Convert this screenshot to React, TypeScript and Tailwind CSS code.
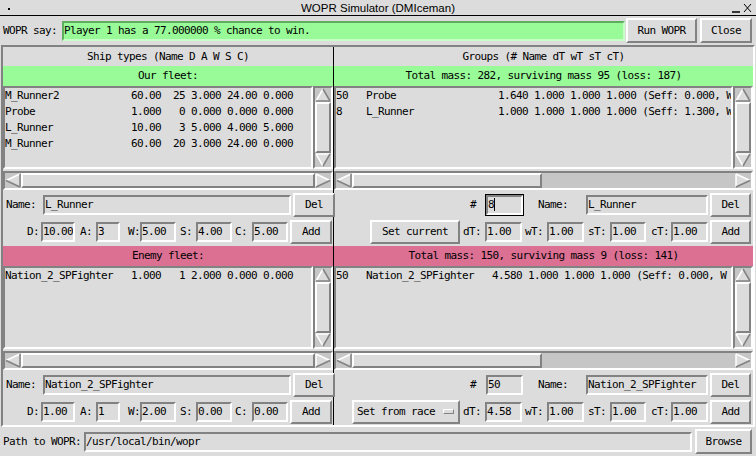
import React from "react";

const raised =
  "border-2 border-t-white border-l-white border-r-[#828282] border-b-[#828282]";
const sunken =
  "border-2 border-t-[#828282] border-l-[#828282] border-r-white border-b-white";

function Btn({ className = "", children }: { className?: string; children?: React.ReactNode }) {
  return (
    <div
      className={`${raised} bg-[#dcdcdc] h-[24px] shrink-0 flex items-center justify-center ${className}`}
    >
      {children}
    </div>
  );
}

function Entry({
  className = "",
  children,
  focus = false,
}: {
  className?: string;
  children?: React.ReactNode;
  focus?: boolean;
}) {
  return (
    <div
      className={`${sunken} h-[20px] shrink-0 flex items-center overflow-hidden whitespace-pre ${
        focus ? "outline outline-black" : ""
      } ${className}`}
    >
      {children}
    </div>
  );
}

function Label({ className = "", children }: { className?: string; children?: React.ReactNode }) {
  return <span className={`shrink-0 whitespace-pre ${className}`}>{children}</span>;
}

const G = "#dcdcdc";
const D = "#828282";

function ArrowUp() {
  return (
    <svg width="16" height="14" viewBox="0 0 16 14" className="shrink-0">
      <polygon points="8,1 1,13 15,13" fill={G} />
      <line x1="1" y1="13" x2="8" y2="1" stroke="white" strokeWidth="1.5" />
      <line x1="8" y1="1" x2="15" y2="13" stroke={D} strokeWidth="1.5" />
      <line x1="1" y1="13" x2="15" y2="13" stroke={D} strokeWidth="1.5" />
    </svg>
  );
}

function ArrowDown() {
  return (
    <svg width="16" height="14" viewBox="0 0 16 14" className="shrink-0">
      <polygon points="1,1 15,1 8,13" fill={G} />
      <line x1="1" y1="1" x2="15" y2="1" stroke="white" strokeWidth="1.5" />
      <line x1="1" y1="1" x2="8" y2="13" stroke="white" strokeWidth="1.5" />
      <line x1="15" y1="1" x2="8" y2="13" stroke={D} strokeWidth="1.5" />
    </svg>
  );
}

function ArrowLeft() {
  return (
    <svg width="16" height="15" viewBox="0 0 16 15" className="shrink-0">
      <polygon points="1,7.5 15,1 15,14" fill={G} />
      <line x1="1" y1="7.5" x2="15" y2="1" stroke="white" strokeWidth="1.5" />
      <line x1="1" y1="7.5" x2="15" y2="14" stroke={D} strokeWidth="1.5" />
      <line x1="15" y1="1" x2="15" y2="14" stroke={D} strokeWidth="1.5" />
    </svg>
  );
}

function ArrowRight() {
  return (
    <svg width="16" height="15" viewBox="0 0 16 15" className="shrink-0">
      <polygon points="1,1 15,7.5 1,14" fill={G} />
      <line x1="1" y1="1" x2="1" y2="14" stroke="white" strokeWidth="1.5" />
      <line x1="1" y1="1" x2="15" y2="7.5" stroke="white" strokeWidth="1.5" />
      <line x1="15" y1="7.5" x2="1" y2="14" stroke={D} strokeWidth="1.5" />
    </svg>
  );
}

function VScroll() {
  return (
    <div className={`${sunken} w-[20px] shrink-0 bg-[#c6c6c6] flex flex-col items-center`}>
      <ArrowUp />
      <div className={`${raised} w-full flex-1 bg-[#dcdcdc]`} />
      <ArrowDown />
    </div>
  );
}

function HScroll({ full = true }: { full?: boolean }) {
  return (
    <div className="h-[22px] flex items-center">
      <div className={`${sunken} h-[19px] w-full bg-[#c6c6c6] flex items-center`}>
        <ArrowLeft />
        <div
          className={`${raised} h-full bg-[#dcdcdc] ${full ? "flex-1" : "w-[190px]"}`}
        />
        {!full && <div className="flex-1" />}
        <ArrowRight />
      </div>
    </div>
  );
}

function ListBox({ lines }: { lines: string[] }) {
  return (
    <div className={`${sunken} flex-1 min-w-0 overflow-hidden whitespace-pre leading-[16px]`}>
      {lines.map((l) => (
        <div key={l}>{l}</div>
      ))}
    </div>
  );
}

function ListArea({ lines }: { lines: string[] }) {
  return (
    <div className="h-[83px] flex">
      <ListBox lines={lines} />
      <VScroll />
    </div>
  );
}

function ShipRows({ name, d, a, w, s, c, last = false }: {
  name: string; d: string; a: string; w: string; s: string; c: string; last?: boolean;
}) {
  return (
    <>
      <div className="h-[27px] flex items-center pl-[3px]">
        <Label className="w-[34px]">Name:</Label>
        <Entry className="ml-[3px] w-[248px]">{name}</Entry>
        <Btn className="ml-[2px] w-[42px]">Del</Btn>
      </div>
      <div className={`${last ? "h-[27px]" : "h-[28px]"} flex items-center pl-[21px]`}>
        <Label className="w-[17px] pl-[3px]">D:</Label>
        <Entry className="w-[34px]">{d}</Entry>
        <Label className="ml-[5px] w-[16px]">A:</Label>
        <Entry className="w-[24px]">{a}</Entry>
        <Label className="ml-[8px] w-[12px]">W:</Label>
        <Entry className="w-[36px]">{w}</Entry>
        <Label className="ml-[4px] w-[16px]">S:</Label>
        <Entry className="w-[36px]">{s}</Entry>
        <Label className="ml-[3px] w-[17px]">C:</Label>
        <Entry className="w-[36px]">{c}</Entry>
        <Btn className="ml-[2px] w-[42px]">Add</Btn>
      </div>
    </>
  );
}

function GroupRows({ num, name, dT, focus = false, fromRace = false, last = false }: {
  num: string; name: string; dT: string; focus?: boolean; fromRace?: boolean; last?: boolean;
}) {
  return (
    <>
      <div className="h-[27px] flex items-center pr-[2px]">
        <Label className="ml-auto w-[6px]">#</Label>
        <Entry focus={focus} className="ml-[10px] w-[37px]">
          {num}
          {focus && <span className="inline-block w-[1px] h-[13px] bg-black" />}
        </Entry>
        <Label className="ml-[15px] w-[30px]">Name:</Label>
        <Entry className="ml-[18px] w-[122px]">{name}</Entry>
        <Btn className="ml-[2px] w-[41px]">Del</Btn>
      </div>
      <div className={`${last ? "h-[27px]" : "h-[28px]"} flex items-center pr-[2px]`}>
        {fromRace ? (
          <Btn className="ml-auto w-[108px] justify-start pl-[3px]">
            <span className="whitespace-pre">Set from race</span>
            <span className={`${raised} ml-[8px] w-[11px] h-[5px] border-[1px]`} />
          </Btn>
        ) : (
          <Btn className="ml-auto w-[90px]">Set current</Btn>
        )}
        <Label className="ml-[3px] w-[18px]">dT:</Label>
        <Entry className="ml-[4px] w-[37px]">{dT}</Entry>
        <Label className="ml-[3px] w-[18px]">wT:</Label>
        <Entry className="ml-[4px] w-[37px]">1.00</Entry>
        <Label className="ml-[4px] w-[18px]">sT:</Label>
        <Entry className="ml-[4px] w-[36px]">1.00</Entry>
        <Label className="ml-[5px] w-[18px]">cT:</Label>
        <Entry className="ml-[2px] w-[37px]">1.00</Entry>
        <Btn className="ml-[2px] w-[41px]">Add</Btn>
      </div>
    </>
  );
}

const ourShips = [
  "M_Runner2            60.00  25 3.000 24.00 0.000",
  "Probe                1.000   0 0.000 0.000 0.000",
  "L_Runner             10.00   3 5.000 4.000 5.000",
  "M_Runner             60.00  20 3.000 24.00 0.000",
];
const enemyShips = ["Nation_2_SPFighter   1.000   1 2.000 0.000 0.000"];
const ourGroups = [
  "50   Probe                 1.640 1.000 1.000 1.000 (Seff: 0.000, W",
  "8    L_Runner              1.000 1.000 1.000 1.000 (Seff: 1.300, W",
];
const enemyGroups = ["50   Nation_2_SPFighter   4.580 1.000 1.000 1.000 (Seff: 0.000, W"];

export default function App() {
  return (
    <div className="w-[756px] h-[456px] overflow-hidden bg-[#dcdcdc] text-black font-['DejaVu_Sans_Mono',monospace] text-[11px] tracking-[-0.62px] leading-[14px]">
      {/* title bar */}
      <div className="h-[16px] border-b border-black flex items-center font-['Liberation_Sans',sans-serif] text-[11.5px] tracking-normal">
        <div className="w-[40px] h-full flex items-center pl-[8px]">
          <span className="w-[2px] h-[2px] bg-black mt-[2px]" />
        </div>
        <div className="flex-1 text-center">WOPR Simulator (DMIceman)</div>
        <div className="w-[40px] h-full flex items-center justify-end pr-[3px]">
          <svg width="24" height="12" viewBox="0 0 24 12">
            <line x1="3" y1="10" x2="11" y2="10" stroke="black" strokeWidth="1.5" />
            <line x1="15" y1="2" x2="22" y2="10" stroke="black" strokeWidth="1" />
            <line x1="22" y1="2" x2="15" y2="10" stroke="black" strokeWidth="1" />
          </svg>
        </div>
      </div>

      {/* WOPR say row */}
      <div className="h-[29px] flex items-center pl-[3px]">
        <Label className="w-[54px]">WOPR say:</Label>
        <div className="ml-[5px] w-[563px] h-[20px] bg-[#98fb98] border-2 border-t-[#5fae5f] border-l-[#5fae5f] border-r-[#c8ffc8] border-b-[#c8ffc8] flex items-center whitespace-pre">
          Player 1 has a 77.000000 % chance to win.
        </div>
        <Btn className="ml-[1px] w-[71px] h-[25px]">Run WOPR</Btn>
        <Btn className="ml-[3px] w-[52px] h-[25px]">Close</Btn>
      </div>

      {/* main frame */}
      <div className={`${sunken} mx-[1px] h-[382px] flex`}>
        <div className="w-[331px] border-r border-black flex flex-col">
          <div className="h-[19px] flex items-center justify-center">Ship types (Name D A W S C)</div>
          <div className="h-[20px] bg-[#98fb98] flex items-center justify-center">Our fleet:</div>
          <ListArea lines={ourShips} />
          <HScroll />
          <ShipRows name="L_Runner" d="10.00" a="3" w="5.00" s="4.00" c="5.00" />
          <div className="h-[20px] bg-[#db7093] flex items-center justify-center">Enemy fleet:</div>
          <ListArea lines={enemyShips} />
          <HScroll />
          <ShipRows name="Nation_2_SPFighter" d="1.00" a="1" w="2.00" s="0.00" c="0.00" last />
        </div>
        <div className="flex-1 min-w-0 flex flex-col">
          <div className="h-[19px] flex items-center justify-center">Groups (# Name dT wT sT cT)</div>
          <div className="h-[20px] bg-[#98fb98] flex items-center justify-center whitespace-pre">
            Total mass: 282, surviving mass 95 (loss: 187)
          </div>
          <ListArea lines={ourGroups} />
          <HScroll full={false} />
          <GroupRows num="8" name="L_Runner" dT="1.00" focus />
          <div className="h-[20px] bg-[#db7093] flex items-center justify-center whitespace-pre">
            Total mass: 150, surviving mass 9 (loss: 141)
          </div>
          <ListArea lines={enemyGroups} />
          <HScroll full={false} />
          <GroupRows num="50" name="Nation_2_SPFighter" dT="4.58" fromRace last />
        </div>
      </div>

      {/* path row */}
      <div className="h-[29px] flex items-center pl-[3px]">
        <Label className="w-[78px]">Path to WOPR:</Label>
        <Entry className="ml-[3px] w-[608px]">/usr/local/bin/wopr</Entry>
        <Btn className="ml-[3px] w-[57px] h-[25px]">Browse</Btn>
      </div>
    </div>
  );
}
